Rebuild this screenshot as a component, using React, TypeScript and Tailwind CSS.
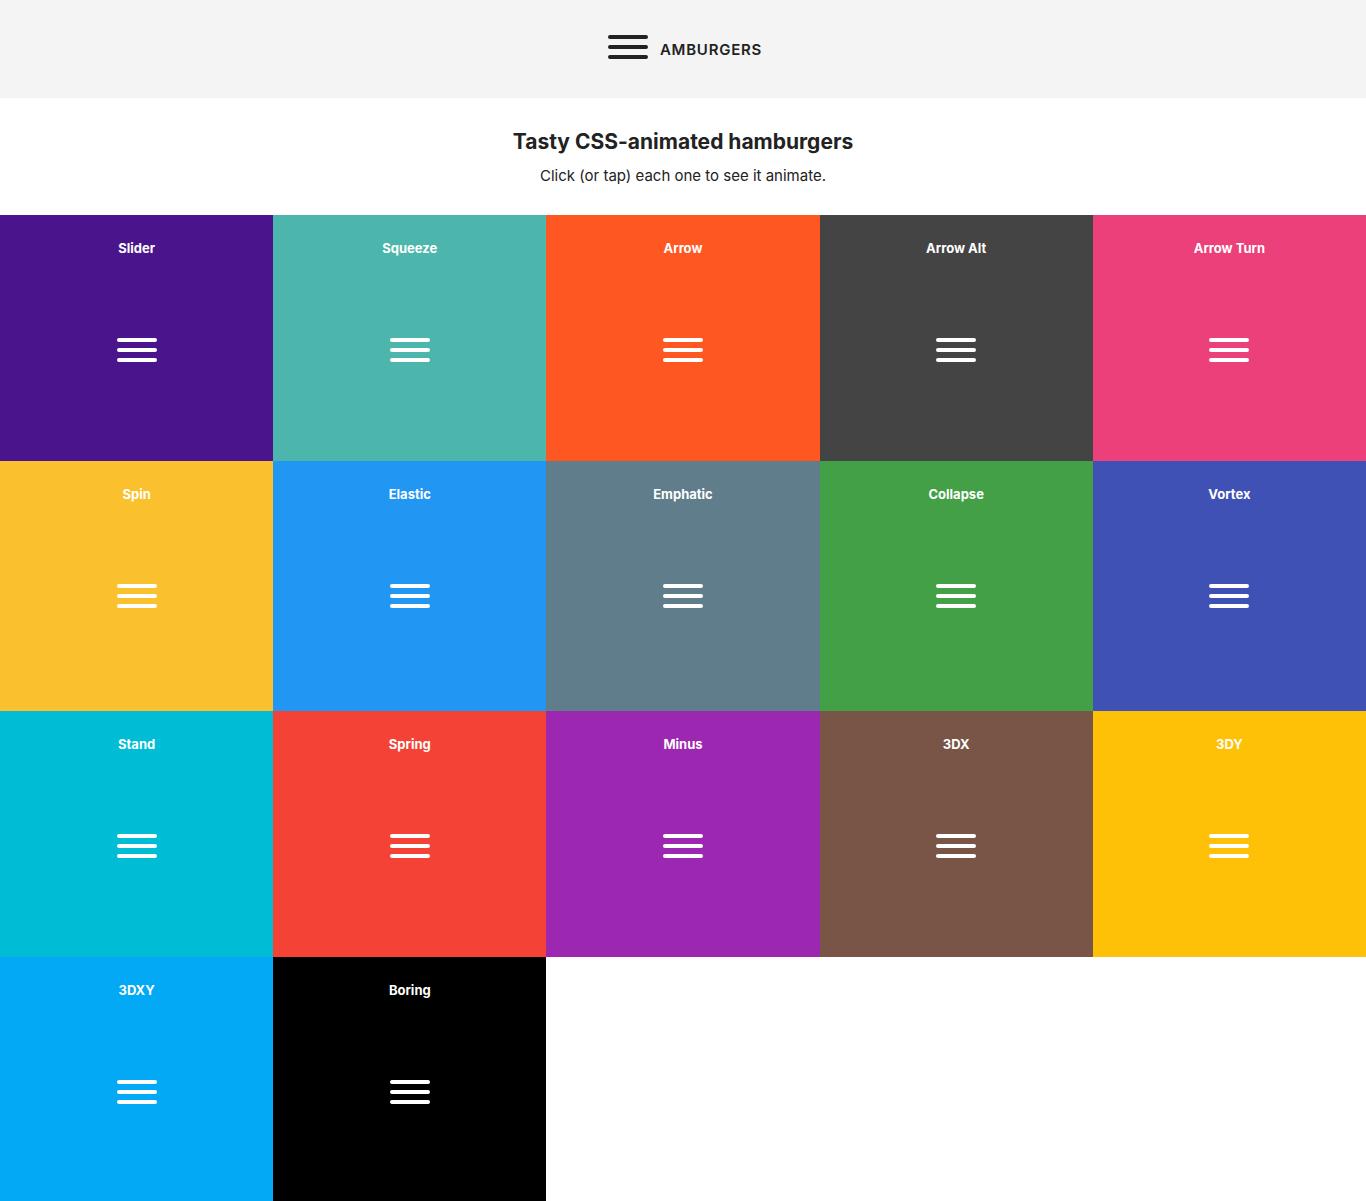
const burgers = [
  { name: "Slider", bg: "bg-[#4a148c]" },
  { name: "Squeeze", bg: "bg-[#4db6ac]" },
  { name: "Arrow", bg: "bg-[#ff5722]" },
  { name: "Arrow Alt", bg: "bg-[#444444]" },
  { name: "Arrow Turn", bg: "bg-[#ec407a]" },
  { name: "Spin", bg: "bg-[#fbc02d]" },
  { name: "Elastic", bg: "bg-[#2196f3]" },
  { name: "Emphatic", bg: "bg-[#607d8b]" },
  { name: "Collapse", bg: "bg-[#43a047]" },
  { name: "Vortex", bg: "bg-[#3f51b5]" },
  { name: "Stand", bg: "bg-[#00bcd4]" },
  { name: "Spring", bg: "bg-[#f44336]" },
  { name: "Minus", bg: "bg-[#9c27b0]" },
  { name: "3DX", bg: "bg-[#795548]" },
  { name: "3DY", bg: "bg-[#ffc107]" },
  { name: "3DXY", bg: "bg-[#03a9f4]" },
  { name: "Boring", bg: "bg-black" },
];

function Bars() {
  return (
    <span className="flex w-10 flex-col gap-1.5">
      <span className="h-1 rounded-full bg-current" />
      <span className="h-1 rounded-full bg-current" />
      <span className="h-1 rounded-full bg-current" />
    </span>
  );
}

export default function App() {
  return (
    <div className="bg-white font-['Inter',sans-serif] text-[#222222]">
      <header className="flex justify-center bg-[#f4f4f4] pt-[35px] pb-[38px]">
        <h1 className="flex items-start gap-3 pl-1">
          <button type="button" aria-label="Menu" className="cursor-pointer">
            <Bars />
          </button>
          <span className="pt-[5px] text-[15px] leading-5 font-semibold tracking-wider">AMBURGERS</span>
        </h1>
      </header>
      <section className="px-4 pt-7 pb-[27px] text-center">
        <h2 className="text-[21px] leading-8 font-bold">Tasty CSS-animated hamburgers</h2>
        <p className="mt-1.5 text-[15px] leading-6">Click (or tap) each one to see it animate.</p>
      </section>
      <main className="grid grid-cols-5 grid-rows-[246px_250px_246px_244px]">
        {burgers.map((b) => (
          <article key={b.name} className={`flex flex-col items-center pt-[23px] text-white ${b.bg}`}>
            <h3 className="text-[13px] leading-5 font-bold">{b.name}</h3>
            <button type="button" aria-label={b.name} className="mt-[65px] cursor-pointer p-[15px]">
              <Bars />
            </button>
          </article>
        ))}
      </main>
    </div>
  );
}
